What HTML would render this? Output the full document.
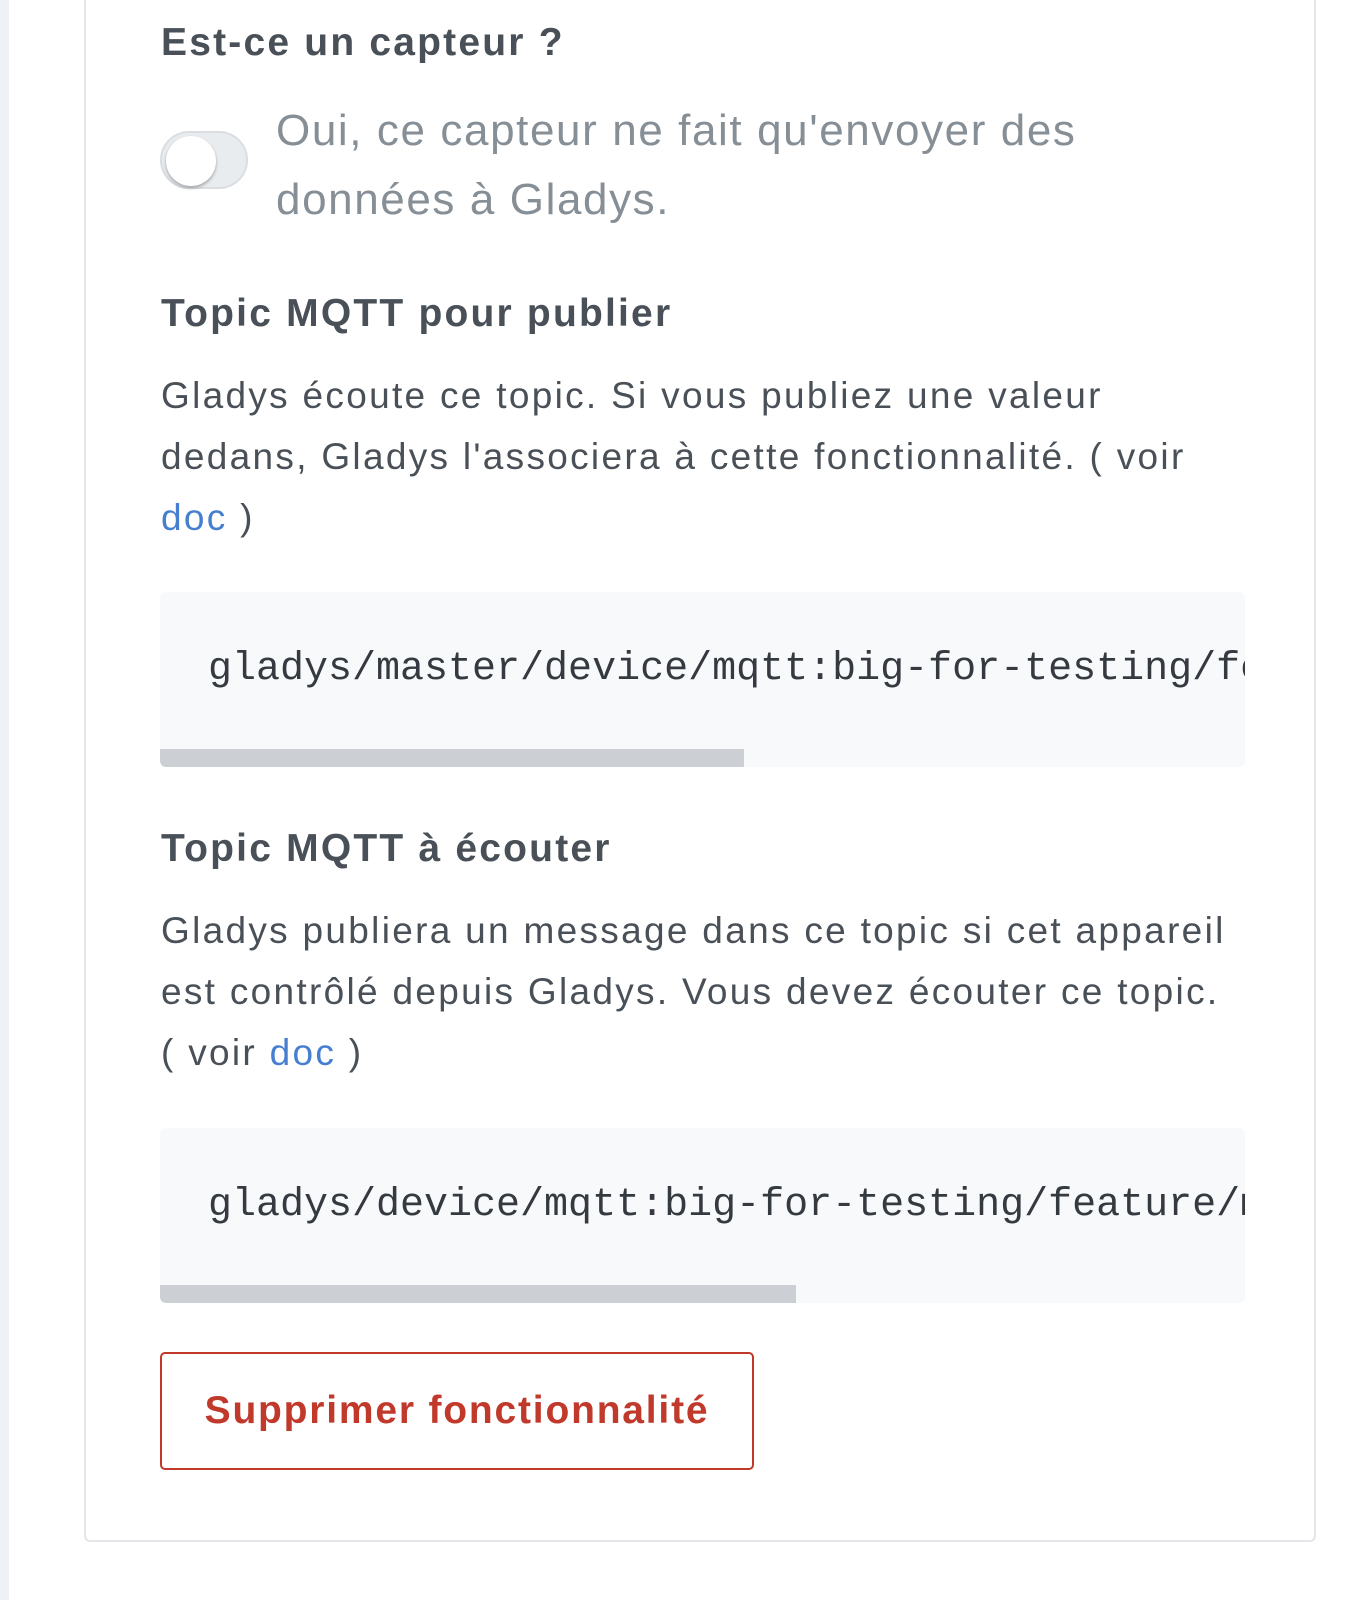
<!DOCTYPE html>
<html><head><meta charset="utf-8"><style>
body{margin:0;width:1359px;height:1600px;background:#fff;position:relative;overflow:hidden;font-family:"Liberation Sans",sans-serif;}
.strip{position:absolute;left:0;top:0;width:9px;height:1600px;background:#eef1f6;}
.card{position:absolute;left:84px;top:-10px;width:1232px;height:1552px;border:2px solid #e4e6ea;border-radius:6px;box-sizing:border-box;}
h{position:absolute;left:161px;font-weight:bold;font-size:39px;letter-spacing:2.2px;color:#495057;white-space:nowrap;}
.p{position:absolute;left:161px;font-size:37px;letter-spacing:2.3px;line-height:61px;color:#495057;width:1150px;white-space:nowrap;}
.p a{color:#467fcf;text-decoration:none;}
.code{position:absolute;left:160px;width:1085px;height:175px;background:#f8f9fa;border-radius:6px;overflow:hidden;}
.code span{position:absolute;left:48px;top:55px;font-family:"Liberation Mono",monospace;font-size:40px;color:#343a40;white-space:nowrap;}
.sb{position:absolute;left:0;bottom:0;height:18px;background:#ccd0d5;}
</style></head><body>
<div class="strip"></div>
<div class="card"></div>
<h style="top:21px">Est-ce un capteur ?</h>
<div style="position:absolute;left:160px;top:131px;width:88px;height:58px;border-radius:30px;background:#e9ecef;border:2px solid #dadde1;box-sizing:border-box;"></div>
<div style="position:absolute;left:166px;top:136px;width:50px;height:50px;border-radius:50%;background:#fff;box-shadow:0 2px 3px rgba(0,0,0,.3);"></div>
<div class="p" style="top:96px;left:276px;font-size:44px;letter-spacing:1.6px;line-height:69px;color:#868e96;">Oui, ce capteur ne fait qu'envoyer des<br>données à Gladys.</div>
<h style="top:292px">Topic MQTT pour publier</h>
<div class="p" style="top:365px">Gladys écoute ce topic. Si vous publiez une valeur<br>dedans, Gladys l'associera à cette fonctionnalité. ( voir<br><a>doc</a> )</div>
<div class="code" style="top:592px"><span>gladys/master/device/mqtt:big-for-testing/feature/mqtt</span><div class="sb" style="width:584px"></div></div>
<h style="top:827px">Topic MQTT à écouter</h>
<div class="p" style="top:900px">Gladys publiera un message dans ce topic si cet appareil<br>est contrôlé depuis Gladys. Vous devez écouter ce topic.<br>( voir <a>doc</a> )</div>
<div class="code" style="top:1128px"><span>gladys/device/mqtt:big-for-testing/feature/mqtt</span><div class="sb" style="width:636px"></div></div>
<div style="position:absolute;left:160px;top:1352px;width:594px;height:118px;border:2px solid #c0392b;border-radius:5px;box-sizing:border-box;color:#c0392b;font-weight:bold;font-size:39px;letter-spacing:1.8px;text-align:center;line-height:114px;">Supprimer fonctionnalité</div>
</body></html>
